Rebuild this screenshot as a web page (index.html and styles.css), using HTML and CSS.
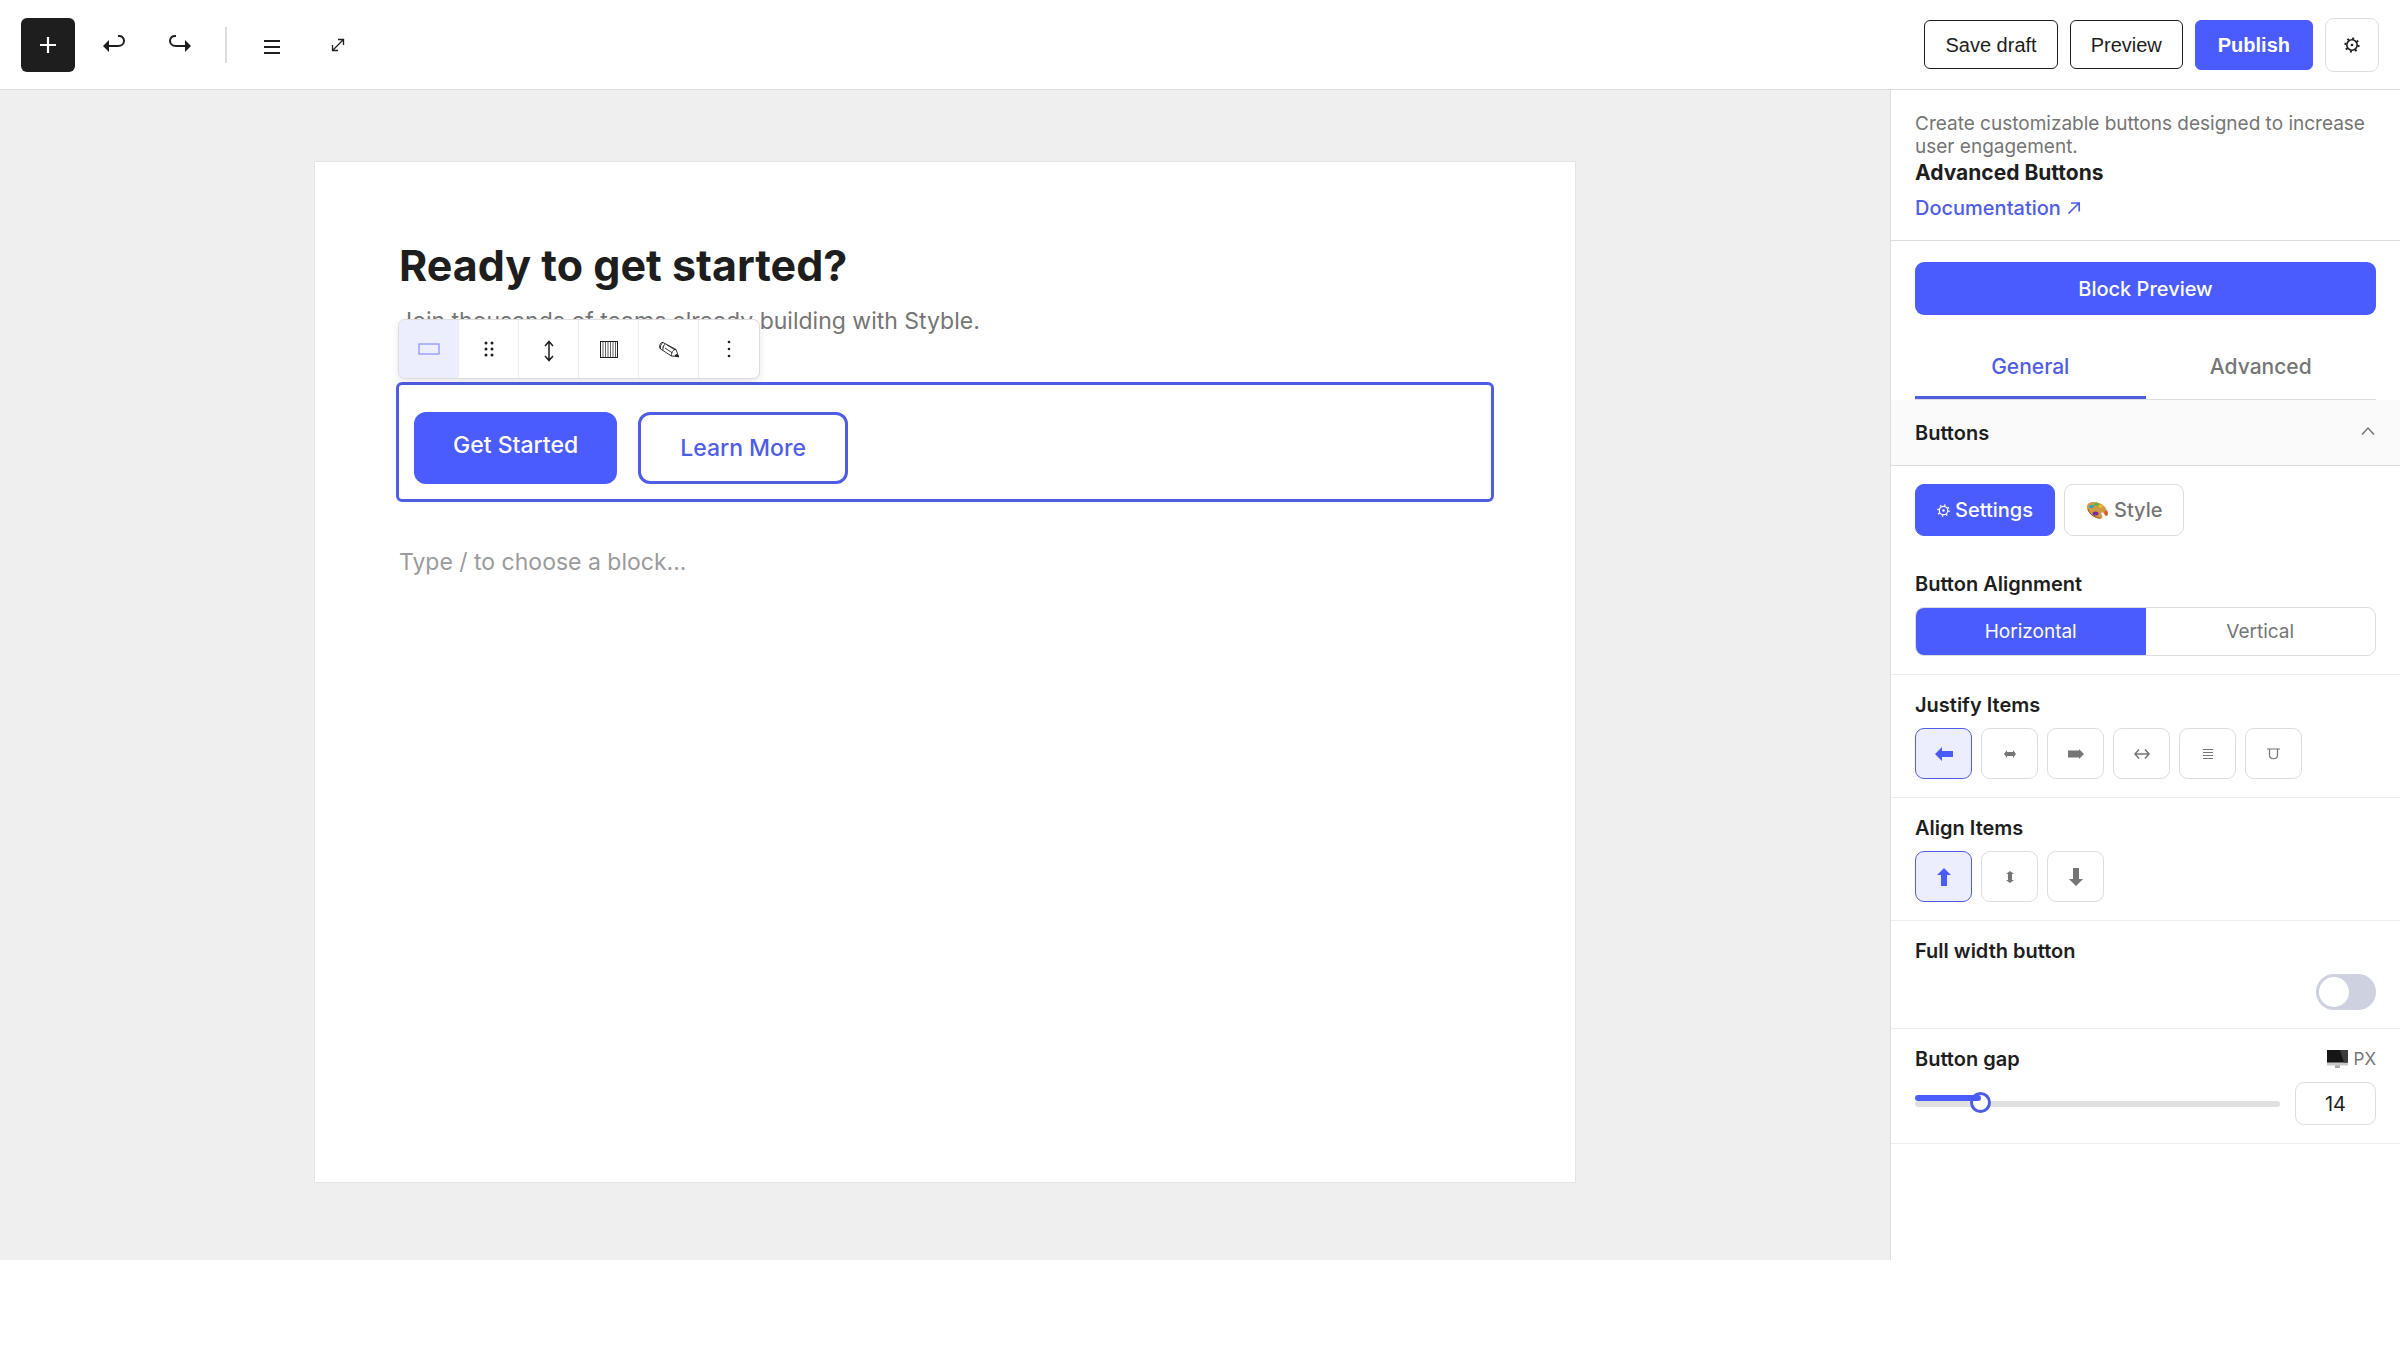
FILE: index.html
```html
<!DOCTYPE html>
<html lang="en">
<head>
<meta charset="utf-8">
<meta name="viewport" content="width=device-width, initial-scale=1">
<title>Advanced Buttons</title>
<link rel="stylesheet" href="styles.css">
</head>
<body>
<header class="topbar">
  <div class="tools">
    <button class="tool tool-add" type="button" aria-label="Add block">
      <svg width="18" height="18" viewBox="0 0 18 18"><path d="M9 1v16M1 9h16" stroke="currentColor" stroke-width="2.2" fill="none"/></svg>
    </button>
    <button class="tool" type="button" aria-label="Undo">
      <svg class="raised" width="24" height="20" viewBox="0 0 24 20"><path d="M16 3c8-1 8 10 0 10H6" fill="none" stroke="currentColor" stroke-width="2"/><path d="M1 13l6-6v12z" fill="currentColor"/></svg>
    </button>
    <button class="tool" type="button" aria-label="Redo">
      <svg class="raised" width="24" height="20" viewBox="0 0 24 20"><path d="M8 3c-8-1-8 10 0 10h10" fill="none" stroke="currentColor" stroke-width="2"/><path d="M23 13l-6-6v12z" fill="currentColor"/></svg>
    </button>
    <span class="divider"></span>
    <button class="tool" type="button" aria-label="List view">
      <svg class="lowered" width="16" height="14" viewBox="0 0 16 14"><path d="M0 1h16M0 7h16M0 13h16" stroke="currentColor" stroke-width="2"/></svg>
    </button>
    <button class="tool" type="button" aria-label="Full screen">
      <svg width="14" height="14" viewBox="0 0 14 14"><path d="M2 12L12 2M7 1.500h5.500V7M1.500 7v5.500H7" fill="none" stroke="currentColor" stroke-width="1.300"/></svg>
    </button>
  </div>
  <div class="actions">
    <button class="action" type="button">Save draft</button>
    <button class="action" type="button">Preview</button>
    <button class="action action-primary" type="button">Publish</button>
    <button class="tool tool-outline" type="button" aria-label="Settings">
      <svg width="16" height="16" viewBox="0 0 16 16" fill="none" stroke="currentColor"><circle cx="8" cy="8" r="5.200" stroke-width="1.600"/><circle cx="8" cy="8" r="6.600" stroke-width="2" stroke-dasharray="2 3.180"/><circle cx="8" cy="8" r="1.300" fill="currentColor" stroke="none"/></svg>
    </button>
  </div>
</header>

<div class="workspace">
  <main class="stage">
    <article class="page">
      <h1>Ready to get started?</h1>
      <p class="lead">Join thousands of teams already building with Styble.</p>
      <section class="block">
        <div class="block-toolbar" role="toolbar" aria-label="Block tools">
          <button class="block-tool is-active" type="button" aria-label="Buttons block">
            <svg width="22" height="12" viewBox="0 0 22 12"><rect x="1" y="1" width="20" height="10" fill="none" stroke="#8f97fb" stroke-width="1.300"/></svg>
          </button>
          <button class="block-tool" type="button" aria-label="Drag">
            <svg width="10" height="16" viewBox="0 0 10 16" fill="currentColor"><circle cx="2" cy="2" r="1.500"/><circle cx="8" cy="2" r="1.500"/><circle cx="2" cy="8" r="1.500"/><circle cx="8" cy="8" r="1.500"/><circle cx="2" cy="14" r="1.500"/><circle cx="8" cy="14" r="1.500"/></svg>
          </button>
          <button class="block-tool" type="button" aria-label="Move">
            <svg class="lowered" width="10" height="22" viewBox="0 0 10 22"><path d="M5 2v18M1 6l4-4.500L9 6M1 16l4 4.500L9 16" fill="none" stroke="currentColor" stroke-width="1.500"/></svg>
          </button>
          <button class="block-tool" type="button" aria-label="Columns">
            <svg width="18" height="17" viewBox="0 0 18 17" fill="none" stroke="currentColor"><rect x=".5" y=".5" width="17" height="16"/><path d="M3 1v15M5.500 1v15M8 1v15M10.500 1v15M13 1v15M15.500 1v15" stroke-width=".7"/></svg>
          </button>
          <button class="block-tool" type="button" aria-label="Edit">
            <svg width="22" height="17" viewBox="0 0 22 17" fill="none" stroke="currentColor" stroke-width=".9"><path d="M5 1.500L18 8.500l2.500 7-7-.5L2.500 8C.5 6 2 1 5 1.500zM18 8.500c-3 0-5 3-4.500 6.500M5 1.500c-2 1-3 4-2.500 6.500M7.500 3C5.500 4 4.500 6 5 9.200M9 4l8 4.800M7 7l7.500 5M5 5.500c1-.5 1 1 0 1"/><path d="M18.500 13l2.500 3-4-1z" fill="currentColor"/></svg>
          </button>
          <button class="block-tool" type="button" aria-label="More options">
            <svg width="4" height="18" viewBox="0 0 4 18" fill="currentColor"><circle cx="2" cy="2" r="1.300"/><circle cx="2" cy="9" r="1.300"/><circle cx="2" cy="16" r="1.300"/></svg>
          </button>
        </div>
        <a class="cta cta-solid" href="#">Get Started</a>
        <a class="cta cta-outline" href="#">Learn More</a>
      </section>
      <p class="placeholder">Type / to choose a block...</p>
    </article>
  </main>

  <aside class="sidebar">
    <div class="intro">
      <p>Create customizable buttons designed to increase user engagement.</p>
      <h2>Advanced Buttons</h2>
      <a href="#">Documentation <svg width="14" height="14" viewBox="0 0 14 14"><path d="M1.500 12.500L12 2M4 2h8.200v8.500" fill="none" stroke="currentColor" stroke-width="1.700"/></svg></a>
    </div>
    <div class="overview">
      <button class="preview" type="button">Block Preview</button>
      <div class="tabs" role="tablist">
        <button class="tab is-active" type="button" role="tab" aria-selected="true">General</button>
        <button class="tab" type="button" role="tab" aria-selected="false">Advanced</button>
      </div>
    </div>
    <button class="panel-head" type="button" aria-expanded="true">
      Buttons
      <svg class="raised" width="16" height="10" viewBox="0 0 16 10"><path d="M2 8.500L8 2l6 6.500" fill="none" stroke="#757575" stroke-width="1.500"/></svg>
    </button>
    <div class="modes">
      <button class="mode is-active" type="button">
        <svg width="13" height="13" viewBox="0 0 16 16" fill="none" stroke="currentColor"><circle cx="8" cy="8" r="5.200" stroke-width="1.500"/><circle cx="8" cy="8" r="6.800" stroke-width="2" stroke-dasharray="1.800 3.540"/><circle cx="8" cy="8" r="1.500" fill="currentColor" stroke="none"/></svg>
        Settings
      </button>
      <button class="mode" type="button">
        <svg width="23" height="18" viewBox="0 0 23 18"><path d="M1 5C2-1 14 0 19 6c3 4 4 8 2 9-2 .5-2-1.500-3.500-3-1-1-3 0-2 1.500 1 1.700 2 3.500-1 3.900C8 18 0 11 1 5z" fill="#d39a45"/><path d="M2 8c1 5 7 9 12.500 9.300" fill="none" stroke="#8a5a22"/><ellipse cx="5.500" cy="5.500" rx="2.500" ry="1.700" fill="#2ba7b8"/><ellipse cx="10.500" cy="3.300" rx="2.200" ry="1.500" fill="#49b93c"/><ellipse cx="14.500" cy="5.200" rx="1.800" ry="1.300" fill="#e9c72e"/><ellipse cx="9.500" cy="12.500" rx="3" ry="2" fill="#7a2a9c"/><ellipse cx="20" cy="12" rx="1.500" ry="2.300" fill="#e2503c"/></svg>
        Style
      </button>
    </div>
    <section class="field">
      <h3>Button Alignment</h3>
      <div class="segments">
        <button class="segment is-active" type="button">Horizontal</button>
        <button class="segment" type="button">Vertical</button>
      </div>
    </section>
    <section class="field">
      <h3>Justify Items</h3>
      <div class="options">
        <button class="option is-active" type="button" aria-label="Start"><svg width="18" height="14" viewBox="0 0 18 14"><path d="M0 7l7-7v4h11v6H7v4z" fill="currentColor"/></svg></button>
        <button class="option" type="button" aria-label="Center"><svg width="12" height="8" viewBox="0 0 12 8"><path d="M0 4l3-4v2h6V0l3 4-3 4V6H3v2z" fill="currentColor"/></svg></button>
        <button class="option" type="button" aria-label="End"><svg width="16" height="10" viewBox="0 0 16 10"><path d="M0 1.500h11V0l5 5-5 5V8.500H0z" fill="currentColor"/></svg></button>
        <button class="option" type="button" aria-label="Space between"><svg width="16" height="10" viewBox="0 0 16 10"><path d="M1 5h14M5 .5L1 5l4 4.500M11 .5L15 5l-4 4.500" fill="none" stroke="currentColor" stroke-width="1.500"/></svg></button>
        <button class="option" type="button" aria-label="Space around"><svg width="10" height="10" viewBox="0 0 10 10"><path d="M0 .5h10M0 3.500h10M0 6.500h10M0 9.500h10" stroke="currentColor"/></svg></button>
        <button class="option" type="button" aria-label="Space evenly"><svg width="13" height="12" viewBox="0 0 13 12"><path d="M0 1h13M2.500 1v6c0 5 8 5 8 0V1" fill="none" stroke="currentColor" stroke-width="1.200"/></svg></button>
      </div>
    </section>
    <section class="field">
      <h3>Align Items</h3>
      <div class="options">
        <button class="option is-active" type="button" aria-label="Top"><svg width="14" height="18" viewBox="0 0 14 18"><path d="M7 0l7 7h-4v11H4V7H0z" fill="currentColor"/></svg></button>
        <button class="option" type="button" aria-label="Middle"><svg width="8" height="12" viewBox="0 0 8 12"><path d="M4 0l4 3H6v6h2l-4 3-4-3h2V3H0z" fill="currentColor"/></svg></button>
        <button class="option" type="button" aria-label="Bottom"><svg width="14" height="18" viewBox="0 0 14 18"><path d="M7 18l7-7h-4V0H4v11H0z" fill="currentColor"/></svg></button>
      </div>
    </section>
    <section class="field">
      <label class="field-label" for="full-width">Full width button</label>
      <div class="toggle-row"><input class="toggle" id="full-width" type="checkbox"></div>
    </section>
    <section class="field">
      <div class="label-row">
        <label class="field-label" for="gap">Button gap</label>
        <span class="unit">
          <svg width="21" height="18" viewBox="0 0 21 18"><path d="M8 15h5v3H8z" fill="#aaa"/><path d="M0 0h21v15.500H0z" fill="#c9c9c9"/><path d="M0 0h21v12.500H0z" fill="#161616"/><path d="M13 0h8v12.500h-4z" fill="#3c3c3c"/></svg>
          PX
        </span>
      </div>
      <div class="gap-row">
        <div class="slider">
          <input id="gap" type="range" min="0" max="88" value="14">
          <span class="slider-fill" style="width: 18%"></span>
        </div>
        <input class="number" type="number" value="14" aria-label="Button gap in pixels">
      </div>
    </section>
  </aside>
</div>
</body>
</html>
```
FILE: styles.css
```css
:root {
  --accent: #4b5cff;
  --accent-line: #4f5de4;
  --ink: #1e1e1e;
  --muted: #757575;
  --line: #dddddd;
  --hairline: #ececec;
}

* { box-sizing: border-box; }

body {
  margin: 0;
  background: #fff;
  color: var(--ink);
  font-family: Inter, "Liberation Sans", sans-serif;
  font-size: 20px;
  line-height: 24px;
}

h1, h2, h3, p { margin: 0; }
button, input { margin: 0; font: inherit; color: inherit; }
button { padding: 0; border: 0; background: none; cursor: pointer; }
a { text-decoration: none; }
svg { display: block; flex: none; }
.raised { margin-bottom: 4px; }
.lowered { margin-top: 4px; }

.topbar {
  display: flex;
  align-items: center;
  justify-content: space-between;
  height: 90px;
  padding: 0 21px;
  border-bottom: 1px solid var(--line);
}
.tools, .actions { display: flex; align-items: center; gap: 12px; }
.tool {
  display: flex;
  align-items: center;
  justify-content: center;
  width: 54px;
  height: 54px;
  border-radius: 6px;
}
.tool-add { background: var(--ink); color: #fff; }
.tool-outline { border: 1px solid var(--line); border-radius: 9px; }
.divider { width: 2px; height: 36px; margin: 0 6px; background: var(--line); }
.action {
  height: 49px;
  padding: 0 20px;
  border: 1px solid var(--ink);
  border-radius: 6px;
  font-family: "Liberation Sans", Arial, sans-serif;
}
.action-primary {
  height: 50px;
  padding: 0 22px;
  border-color: var(--accent);
  background: var(--accent);
  color: #fff;
  font-weight: 700;
}

.workspace {
  display: grid;
  grid-template-columns: minmax(0, 1fr) 510px;
  min-height: calc(100vh - 180px);
}
.stage {
  display: flex;
  justify-content: center;
  padding: 72px 48px 78px;
  background: #efefef;
}
.page {
  flex: 1;
  max-width: 1260px;
  padding: 76px 84px;
  background: #fff;
  box-shadow: 0 0 0 1px #e4e4e4;
}
.page h1 { font-size: 43px; line-height: 54px; font-weight: 700; }
.lead { margin-top: 14px; font-size: 23px; line-height: 30px; color: var(--muted); }
.block {
  position: relative;
  display: flex;
  gap: 21px;
  margin-top: 49px;
  padding: 27px 15px 15px;
  border-radius: 3px;
  outline: 3px solid var(--accent-line);
}
.block-toolbar {
  position: absolute;
  left: 0;
  bottom: calc(100% + 7px);
  display: flex;
  height: 58px;
  overflow: hidden;
  border-radius: 6px;
  background: #fff;
  box-shadow: 0 0 0 1px var(--line), 0 3px 9px rgba(0, 0, 0, .12);
}
.block-tool {
  display: flex;
  align-items: center;
  justify-content: center;
  width: 60px;
  border-right: 1px solid var(--hairline);
}
.block-tool:last-child { border-right: 0; }
.block-tool.is-active { background: #eceefe; }
.cta {
  padding: 20px 39px;
  border-radius: 12px;
  font-size: 23px;
  line-height: 26px;
  font-weight: 500;
}
.cta-solid { background: var(--accent); color: #fff; }
.cta-outline { border: 3px solid var(--accent-line); color: var(--accent-line); }
.placeholder { margin-top: 48px; font-size: 23px; line-height: 30px; color: #9b9b9b; }

.sidebar { border-left: 1px solid var(--line); background: #fff; }
.intro { padding: 22px 24px 20px; border-bottom: 1px solid var(--line); }
.intro p { font-size: 19px; line-height: 23px; color: var(--muted); }
.intro h2 { font-size: 21px; line-height: 30px; font-weight: 700; }
.intro a {
  display: flex;
  align-items: center;
  gap: 6px;
  margin-top: 8px;
  color: var(--accent-line);
  font-weight: 500;
}
.overview { padding: 21px 24px 0; }
.preview {
  width: 100%;
  height: 53px;
  border-radius: 9px;
  background: var(--accent);
  color: #fff;
  font-weight: 500;
}
.tabs { display: flex; margin-top: 21px; border-bottom: 1px solid var(--line); }
.tab {
  flex: 1;
  height: 63px;
  padding-top: 2px;
  border-bottom: 3px solid transparent;
  color: var(--muted);
  font-size: 21px;
  font-weight: 500;
}
.tab.is-active { border-color: var(--accent-line); color: var(--accent-line); }
.panel-head {
  display: flex;
  align-items: center;
  justify-content: space-between;
  width: 100%;
  height: 66px;
  padding: 0 24px;
  border-bottom: 1px solid var(--line);
  background: #fafafa;
  font-weight: 600;
}
.modes { display: flex; gap: 9px; padding: 18px 24px; }
.mode {
  display: flex;
  align-items: center;
  gap: 5px;
  height: 52px;
  padding: 0 21px;
  border: 1px solid var(--line);
  border-radius: 9px;
  color: var(--muted);
  font-weight: 500;
}
.mode.is-active { border-color: var(--accent); background: var(--accent); color: #fff; }
.field { padding: 18px 24px; border-bottom: 1px solid var(--hairline); }
.field h3, .field-label { display: block; margin-bottom: 11px; font-size: 20px; font-weight: 600; line-height: 24px; }
.segments {
  display: flex;
  height: 49px;
  overflow: hidden;
  border: 1px solid var(--line);
  border-radius: 9px;
}
.segment { flex: 1; color: var(--muted); font-size: 19px; }
.segment.is-active { background: var(--accent); color: #fff; }
.options { display: flex; gap: 9px; }
.option {
  display: flex;
  align-items: center;
  justify-content: center;
  width: 57px;
  height: 51px;
  border: 1px solid var(--line);
  border-radius: 9px;
  color: var(--muted);
}
.option.is-active { border-color: var(--accent-line); background: #eceefe; color: var(--accent); }
.toggle-row { display: flex; justify-content: flex-end; }
.toggle {
  display: flex;
  align-items: center;
  width: 60px;
  height: 36px;
  padding: 3px;
  border-radius: 18px;
  background: #cdd1e0;
  appearance: none;
}
.toggle::before { content: ""; width: 30px; height: 30px; border-radius: 50%; background: #fff; }
.toggle:checked { justify-content: flex-end; background: var(--accent); }
.label-row { display: flex; justify-content: space-between; }
.unit { display: flex; align-items: center; gap: 6px; height: 24px; color: var(--muted); font-size: 17px; }
.gap-row { display: flex; align-items: center; gap: 15px; }
.slider { position: relative; display: flex; flex: 1; }
.slider input {
  width: 100%;
  height: 6px;
  border-radius: 3px;
  background: #e0e0e0;
  appearance: none;
}
.slider input::-webkit-slider-runnable-track { height: 6px; }
.slider input::-webkit-slider-thumb {
  width: 21px;
  height: 21px;
  margin-top: -9px;
  border: 3px solid var(--accent-line);
  border-radius: 50%;
  background: #fff;
  appearance: none;
}
.slider-fill {
  position: absolute;
  left: 0;
  bottom: 100%;
  height: 6px;
  border-radius: 3px;
  background: var(--accent);
  pointer-events: none;
}
.number {
  width: 81px;
  height: 43px;
  padding: 0;
  border: 1px solid var(--line);
  border-radius: 9px;
  text-align: center;
  appearance: textfield;
}
.number::-webkit-inner-spin-button { display: none; }
```
